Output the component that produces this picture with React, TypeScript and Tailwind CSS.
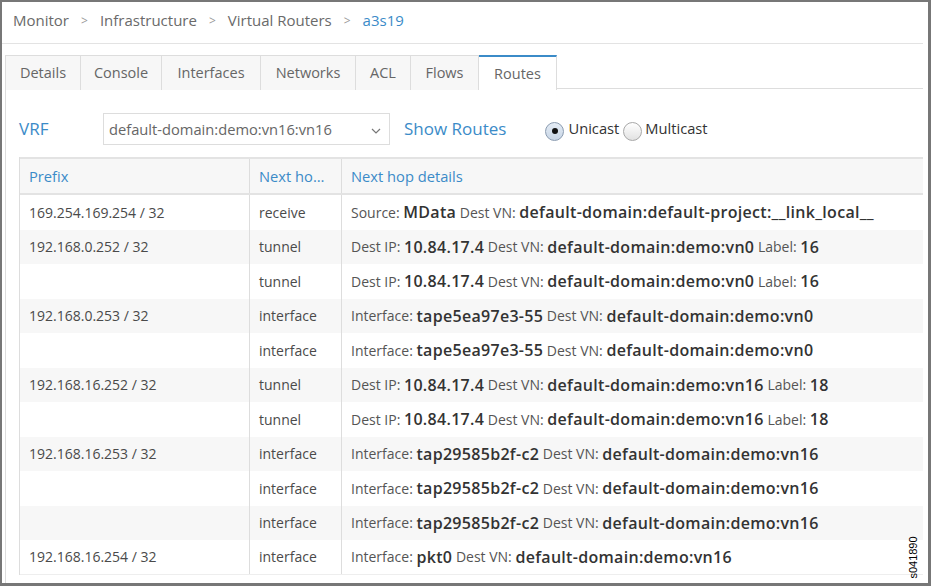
import React from "react";

type Part = { t: string; b?: boolean };
type Row = { prefix: string; hop: string; parts: Part[] };

const L = (t: string): Part => ({ t });
const B = (t: string): Part => ({ t, b: true });

const rows: Row[] = [
  { prefix: "169.254.169.254 / 32", hop: "receive", parts: [L("Source: "), B("MData"), L(" Dest VN: "), B("default-domain:default-project:__link_local__")] },
  { prefix: "192.168.0.252 / 32", hop: "tunnel", parts: [L("Dest IP: "), B("10.84.17.4"), L(" Dest VN: "), B("default-domain:demo:vn0"), L(" Label: "), B("16")] },
  { prefix: "", hop: "tunnel", parts: [L("Dest IP: "), B("10.84.17.4"), L(" Dest VN: "), B("default-domain:demo:vn0"), L(" Label: "), B("16")] },
  { prefix: "192.168.0.253 / 32", hop: "interface", parts: [L("Interface: "), B("tape5ea97e3-55"), L(" Dest VN: "), B("default-domain:demo:vn0")] },
  { prefix: "", hop: "interface", parts: [L("Interface: "), B("tape5ea97e3-55"), L(" Dest VN: "), B("default-domain:demo:vn0")] },
  { prefix: "192.168.16.252 / 32", hop: "tunnel", parts: [L("Dest IP: "), B("10.84.17.4"), L(" Dest VN: "), B("default-domain:demo:vn16"), L(" Label: "), B("18")] },
  { prefix: "", hop: "tunnel", parts: [L("Dest IP: "), B("10.84.17.4"), L(" Dest VN: "), B("default-domain:demo:vn16"), L(" Label: "), B("18")] },
  { prefix: "192.168.16.253 / 32", hop: "interface", parts: [L("Interface: "), B("tap29585b2f-c2"), L(" Dest VN: "), B("default-domain:demo:vn16")] },
  { prefix: "", hop: "interface", parts: [L("Interface: "), B("tap29585b2f-c2"), L(" Dest VN: "), B("default-domain:demo:vn16")] },
  { prefix: "", hop: "interface", parts: [L("Interface: "), B("tap29585b2f-c2"), L(" Dest VN: "), B("default-domain:demo:vn16")] },
  { prefix: "192.168.16.254 / 32", hop: "interface", parts: [L("Interface: "), B("pkt0"), L(" Dest VN: "), B("default-domain:demo:vn16")] },
];

const tabs = ["Details", "Console", "Interfaces", "Networks", "ACL", "Flows", "Routes"];
const tabW: Record<string, string> = {
  Details: "w-[76px]",
  Console: "w-[81px]",
  Interfaces: "w-[99px]",
  Networks: "w-[95px]",
  ACL: "w-[55px]",
  Flows: "w-[68px]",
  Routes: "w-[78px]",
};

export default function App() {
  return (
    <div
      className="relative w-[931px] h-[586px] overflow-hidden bg-white border-t-2 border-l-2 border-r-[3px] border-b-[3px] border-[#777777]"
      style={{ fontFamily: '"Open Sans", "Liberation Sans", sans-serif' }}
    >
      <div className="w-[921px] h-[42px] flex items-center pl-[11px] pb-[4px] border-b border-[#e3e3e3] text-[15px] text-[#6a6a6a]">
        <span>Monitor</span>
        <span className="mx-[12px] text-[#9a9a9a] text-[12px]">&gt;</span>
        <span>Infrastructure</span>
        <span className="mx-[12px] text-[#9a9a9a] text-[12px]">&gt;</span>
        <span>Virtual Routers</span>
        <span className="mx-[12px] text-[#9a9a9a] text-[12px]">&gt;</span>
        <span className="text-[#3b8bc8]">a3s19</span>
      </div>

      <div className="ml-[3px] mt-[11px] w-[918px]">
        <div className="flex h-[34px] border-b border-[#dddddd]">
          {tabs.map((t, i) => {
            const active = t === "Routes";
            return (
              <div
                key={t}
                className={
                  "h-[35px] flex items-center justify-center text-[14.5px] border-t border-r border-[#dddddd] " +
                  tabW[t] +
                  (i === 0 ? " border-l" : "") +
                  (active
                    ? " bg-white border-t-2 border-t-[#3b8bc8] text-[#666666] -mb-px"
                    : " bg-[#f7f7f7] text-[#666666]")
                }
              >
                {t}
              </div>
            );
          })}
        </div>

        <div className="border-l border-[#dddddd] pl-[13px] pt-[24px] h-[500px]">
          <div className="flex items-center h-[32px]">
            <span className="w-[84px] text-[17px] text-[#3b8bc8]">VRF</span>
            <div className="w-[287px] h-[32px] border border-[#dddddd] flex items-center justify-between pl-[5px] pr-[8px] text-[14.7px] text-[#666666]">
              <span>default-domain:demo:vn16:vn16</span>
              <svg width="10" height="6" viewBox="0 0 10 6" className="mt-[4px]">
                <path d="M1 1 L5 5 L9 1" fill="none" stroke="#777" strokeWidth="1.2" />
              </svg>
            </div>
            <span className="ml-[14px] text-[17px] text-[#3b8bc8]">Show Routes</span>
            <div className="ml-[39px] flex items-center text-[14.7px] text-[#333333] mt-[4px]">
              <span className="w-[19px] h-[19px] rounded-full border border-[#8a9bb0] bg-gradient-to-b from-[#e4ecf5] to-[#c9d6e6] flex items-center justify-center">
                <span className="w-[6px] h-[6px] rounded-full bg-[#111111]" />
              </span>
              <span className="ml-[4px] -mt-[6px]">Unicast</span>
              <span className="ml-[4px] w-[19px] h-[19px] rounded-full border border-[#a8a8a8] bg-gradient-to-b from-[#ffffff] to-[#e2e2e2]" />
              <span className="ml-[3px] -mt-[6px]">Multicast</span>
            </div>
          </div>

          <div className="mt-[12px] w-[904px] border-l border-[#dddddd]">
            <div className="grid grid-cols-[230px_92px_1fr] h-[38px] bg-[#f7f7f7] border-t-2 border-b-2 border-[#e3e3e3] text-[14.7px] text-[#3b8bc8]">
              <div className="flex items-center pl-[9px] border-r border-[#dddddd]">Prefix</div>
              <div className="flex items-center pl-[9px] border-r border-[#dddddd] whitespace-nowrap overflow-hidden">Next ho…</div>
              <div className="flex items-center pl-[9px]">Next hop details</div>
            </div>
            {rows.map((r, i) => (
              <div
                key={i}
                className={
                  "grid grid-cols-[230px_92px_1fr] h-[34.5px] text-[14px] " +
                  (i % 2 === 1 ? "bg-[#f7f7f7]" : "bg-white") +
                  (i === rows.length - 1 ? " border-b border-[#eeeeee]" : "")
                }
              >
                <div className="flex items-center pl-[9px] border-r border-[#dddddd] text-[#4a4a4a]">{r.prefix}</div>
                <div className="flex items-center pl-[9px] border-r border-[#dddddd] text-[#4a4a4a]">{r.hop}</div>
                <div className="flex items-center pl-[9px] whitespace-pre text-[14px] text-[#555555]">
                  {r.parts.map((p, j) =>
                    p.b ? (
                      <span key={j} className="font-semibold text-[16px] tracking-[0.3px] text-[#333333]">{p.t}</span>
                    ) : (
                      <span key={j}>{p.t}</span>
                    )
                  )}
                </div>
              </div>
            ))}
          </div>
        </div>
      </div>

      <div className="absolute left-[890px] top-[550px] -rotate-90 text-[11px] leading-none text-black" style={{ fontFamily: '"Liberation Sans", sans-serif' }}>
        s041890
      </div>
    </div>
  );
}
